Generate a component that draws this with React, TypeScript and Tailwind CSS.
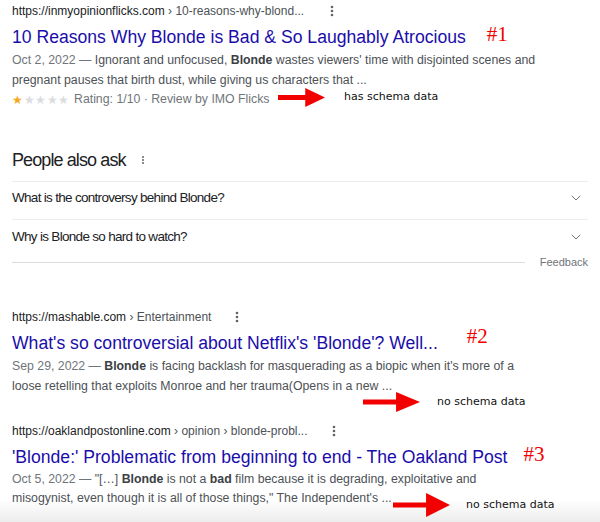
import React from "react";
import { ChevronDown } from "lucide-react";

const sans = "font-['Liberation_Sans',Arial,sans-serif]";

function Dots({ className }: { className?: string }) {
  return (
    <svg width="4" height="12" viewBox="0 0 4 12" className={className}>
      <circle cx="2" cy="2" r="1.3" fill="#5f6368" />
      <circle cx="2" cy="6" r="1.3" fill="#5f6368" />
      <circle cx="2" cy="10" r="1.3" fill="#5f6368" />
    </svg>
  );
}

function Arrow({ w, h }: { w: number; h: number }) {
  const shaft = w * 0.58;
  return (
    <svg width={w} height={h} viewBox={`0 0 ${w} ${h}`}>
      <rect x="0" y={h / 2 - 2.5} width={shaft + 1} height="5" fill="#f20000" />
      <polygon points={`${shaft},0 ${w},${h / 2} ${shaft},${h}`} fill="#f20000" />
    </svg>
  );
}

function Note({ text }: { text: string }) {
  return (
    <span className="font-['DejaVu_Sans',sans-serif] text-[11px] text-[#111]">{text}</span>
  );
}

function Stars() {
  return (
    <span className="flex items-center gap-[0.5px] text-[12px] leading-none">
      <span className="text-[#f4a81d]">★</span>
      <span className="text-[#dadce0]">★</span>
      <span className="text-[#dadce0]">★</span>
      <span className="text-[#dadce0]">★</span>
      <span className="text-[#dadce0]">★</span>
    </span>
  );
}

export default function App() {
  return (
    <div
      className={`relative h-[522px] w-[600px] overflow-hidden bg-[linear-gradient(to_bottom,#ffffff_0px,#ffffff_500px,#ececec_522px)] px-[12px] pt-[1px] ${sans}`}
    >
      {/* result 1 */}
      <div className="relative">
        <div className="flex h-[20px] items-center text-[12px] text-[#202124]">
          <span>https://inmyopinionflicks.com</span>
          <span className="text-[#4d5156]">&nbsp;› 10-reasons-why-blond...</span>
          <Dots className="ml-[26px]" />
        </div>
        <div className="mt-[3px] flex h-[26px] items-center whitespace-nowrap">
          <span className="text-[17.6px] text-[#1a0dab]">
            10 Reasons Why Blonde is Bad &amp; So Laughably Atrocious
          </span>
          <span className="relative top-[-2px] ml-[21px] font-['Liberation_Serif',serif] text-[21px] text-[#f20000]">
            #1
          </span>
        </div>
        <div className="text-[12.3px] leading-[20px] text-[#4d5156] whitespace-nowrap">
          <div>
            <span className="text-[#70757a]">Oct 2, 2022 — </span>Ignorant and unfocused,{" "}
            <b className="text-[#3c4043]">Blonde</b> wastes viewers' time with disjointed scenes and
          </div>
          <div>pregnant pauses that birth dust, while giving us characters that ...</div>
        </div>
        <div className="flex h-[19px] items-center gap-[5px] text-[12.3px] text-[#70757a]">
          <Stars />
          <span>Rating: 1/10 · Review by IMO Flicks</span>
        </div>
        <div className="absolute left-[266px] top-[87px] flex items-center gap-[19px]">
          <Arrow w={47} h={19} />
          <Note text="has schema data" />
        </div>
      </div>

      {/* people also ask */}
      <div className="mt-[37px]">
        <div className="flex h-[36px] items-start border-b border-[#ebebeb]">
          <span className="text-[18px] leading-[28px] tracking-[-0.9px] text-[#202124]">
            People also ask
          </span>
          <Dots className="ml-[15px] mt-[8px] scale-75" />
        </div>
        <div className="flex h-[38px] items-start justify-between border-b border-[#ebebeb] pt-[6px] text-[13.5px] leading-[20px] tracking-[-0.7px] text-[#202124]">
          <span>What is the controversy behind Blonde?</span>
          <ChevronDown size={16} strokeWidth={1.5} className="mr-[4px] mt-[2px] text-[#70757a]" />
        </div>
        <div className="flex h-[34px] items-start justify-between pt-[7px] text-[13.5px] leading-[20px] tracking-[-0.7px] text-[#202124]">
          <span>Why is Blonde so hard to watch?</span>
          <ChevronDown size={16} strokeWidth={1.5} className="mr-[4px] mt-[2px] text-[#70757a]" />
        </div>
        <div className="flex h-[17px] items-center gap-[15px]">
          <div className="h-px flex-1 bg-[#dadce0]" />
          <span className="text-[11px] text-[#70757a]">Feedback</span>
        </div>
      </div>

      {/* result 2 */}
      <div className="relative mt-[36px]">
        <div className="flex h-[20px] items-center text-[12px] text-[#202124]">
          <span>https://mashable.com</span>
          <span className="text-[#4d5156]">&nbsp;› Entertainment</span>
          <Dots className="ml-[24px]" />
        </div>
        <div className="mt-[3px] flex h-[26px] items-center whitespace-nowrap">
          <span className="text-[17.6px] text-[#1a0dab]">
            What's so controversial about Netflix's 'Blonde'? Well...
          </span>
          <span className="relative top-[-6px] ml-[29px] font-['Liberation_Serif',serif] text-[21px] text-[#f20000]">
            #2
          </span>
        </div>
        <div className="text-[12.3px] leading-[20px] text-[#4d5156] whitespace-nowrap">
          <div>
            <span className="text-[#70757a]">Sep 29, 2022 — </span>
            <b className="text-[#3c4043]">Blonde</b> is facing backlash for masquerading as a biopic when it's more of a
          </div>
          <div>loose retelling that exploits Monroe and her trauma(Opens in a new ...</div>
        </div>
        <div className="absolute left-[351px] top-[85px] flex items-center gap-[17px]">
          <Arrow w={57} h={20} />
          <Note text="no schema data" />
        </div>
      </div>

      {/* result 3 */}
      <div className="relative mt-[25px]">
        <div className="flex h-[20px] items-center text-[12px] text-[#202124]">
          <span>https://oaklandpostonline.com</span>
          <span className="text-[#4d5156]">&nbsp;› opinion › blonde-probl...</span>
          <Dots className="ml-[24px]" />
        </div>
        <div className="mt-[3px] flex h-[26px] items-center whitespace-nowrap">
          <span className="text-[17.6px] text-[#1a0dab]">
            'Blonde:' Problematic from beginning to end - The Oakland Post
          </span>
          <span className="relative top-[-2px] ml-[16px] font-['Liberation_Serif',serif] text-[21px] text-[#f20000]">
            #3
          </span>
        </div>
        <div className="text-[12.3px] leading-[19px] text-[#4d5156] whitespace-nowrap">
          <div>
            <span className="text-[#70757a]">Oct 5, 2022 — </span>"[…] <b className="text-[#3c4043]">Blonde</b> is not a{" "}
            <b className="text-[#3c4043]">bad</b> film because it is degrading, exploitative and
          </div>
          <div>misogynist, even though it is all of those things," The Independent's ...</div>
        </div>
      </div>
      <div className="absolute left-[393px] top-[493px] flex items-center gap-[16px]">
        <Arrow w={57} h={24} />
        <Note text="no schema data" />
      </div>
    </div>
  );
}
